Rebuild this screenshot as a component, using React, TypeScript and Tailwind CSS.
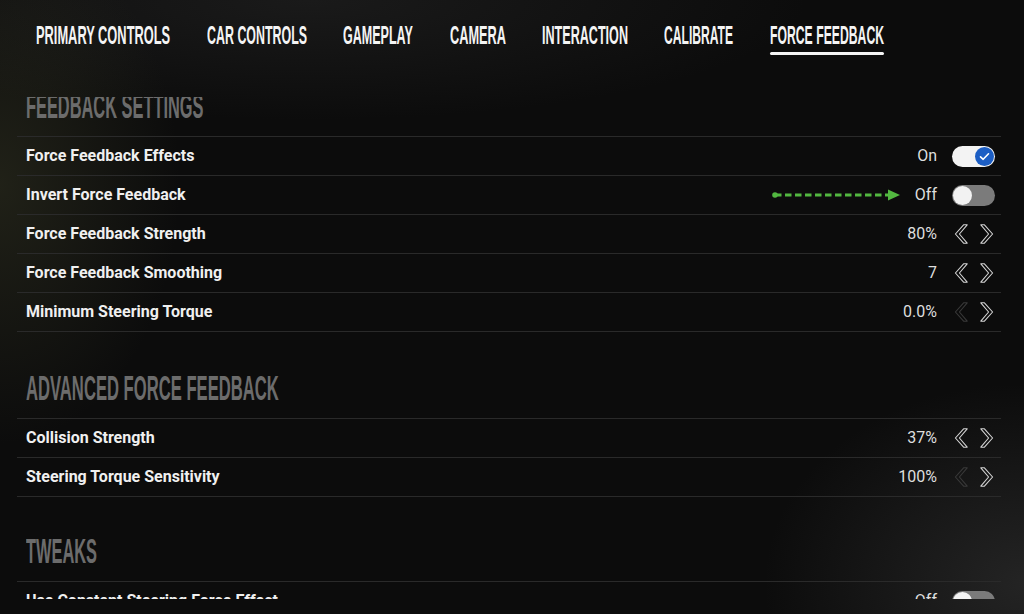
import React from "react";

const tabs: { label: string; w: string; s: string; active?: boolean }[] = [
  { label: "PRIMARY CONTROLS", w: "w-[135px]", s: "scale-x-[0.494]" },
  { label: "CAR CONTROLS", w: "w-[100px]", s: "scale-x-[0.478]" },
  { label: "GAMEPLAY", w: "w-[71px]", s: "scale-x-[0.482]" },
  { label: "CAMERA", w: "w-[56px]", s: "scale-x-[0.491]" },
  { label: "INTERACTION", w: "w-[86px]", s: "scale-x-[0.484]" },
  { label: "CALIBRATE", w: "w-[70px]", s: "scale-x-[0.466]" },
  { label: "FORCE FEEDBACK", w: "w-[114px]", s: "scale-x-[0.47]", active: true },
];

const sans = "font-['Roboto','Liberation_Sans',sans-serif]";
const cond = "font-['Liberation_Sans','Arial',sans-serif]";

function Chevron({ dir, dim }: { dir: "l" | "r"; dim?: boolean }) {
  const pts =
    dir === "l"
      ? "9.6,0.8 13.2,0.8 5.4,10 13.2,19.2 9.6,19.2 1.4,10"
      : "4.4,0.8 0.8,0.8 8.6,10 0.8,19.2 4.4,19.2 12.6,10";
  return (
    <svg width="14" height="20" viewBox="0 0 14 20" className="block">
      <polygon
        points={pts}
        fill="none"
        stroke={dim ? "#393939" : "#d4d4d4"}
        strokeWidth="1.1"
        strokeLinejoin="round"
      />
    </svg>
  );
}

function Toggle({ on }: { on: boolean }) {
  if (on) {
    return (
      <div className="w-[43px] h-[21px] rounded-full bg-[#f3f3f3] flex items-center justify-end pr-[1px]">
        <div className="w-[19px] h-[19px] rounded-full bg-[#1c5ec4] flex items-center justify-center">
          <svg width="11" height="9" viewBox="0 0 11 9">
            <path d="M1.5 4.8 L4.2 7.3 L9.5 1.8" fill="none" stroke="#ffffff" strokeWidth="1.6" strokeLinecap="round" strokeLinejoin="round" />
          </svg>
        </div>
      </div>
    );
  }
  return (
    <div className="w-[43px] h-[21px] rounded-full bg-[#7b7b7b] flex items-center pl-[1px]">
      <div className="w-[19px] h-[19px] rounded-full bg-[#f2f2f2]" />
    </div>
  );
}

function GreenArrow() {
  return (
    <svg width="130" height="14" viewBox="0 0 130 14" className="block mr-[13px]">
      <circle cx="3" cy="7" r="2.8" fill="#52b840" />
      <line x1="3" y1="7" x2="118" y2="7" stroke="#52b840" strokeWidth="3" strokeDasharray="6.5 3.5" />
      <polygon points="116,1.5 128,7 116,12.5" fill="#52b840" />
    </svg>
  );
}

type Row =
  | { label: string; kind: "toggle"; value: string; on: boolean; arrow?: boolean }
  | { label: string; kind: "step"; value: string; leftDim?: boolean };

function SettingRow({ row }: { row: Row }) {
  return (
    <div className="h-[39px] border-b border-[#2a2a2a] flex items-center pl-[9px] pr-[6px]">
      <div className={`${sans} text-[16px] font-bold text-[#f0f0f0] flex-1 whitespace-nowrap`}>{row.label}</div>
      {row.kind === "toggle" && row.arrow ? <GreenArrow /> : null}
      <div className={`${sans} text-[16px] text-[#dedede] mr-[15px] whitespace-nowrap`}>{row.value}</div>
      <div className="w-[43px] flex items-center justify-center">
        {row.kind === "toggle" ? (
          <Toggle on={row.on} />
        ) : (
          <div className="flex items-center gap-[12px]">
            <Chevron dir="l" dim={row.leftDim} />
            <Chevron dir="r" />
          </div>
        )}
      </div>
    </div>
  );
}

function Section({ title, scale, rows, mt }: { title: string; scale: string; rows: Row[]; mt: string }) {
  return (
    <div className={mt}>
      <div className="h-[35px] pl-[9px] mb-[13px] overflow-visible">
        <span
          className={`${cond} inline-block origin-left ${scale} whitespace-nowrap text-[35px] leading-[35px] font-bold text-[#6c6c6c]`}
        >
          {title}
        </span>
      </div>
      <div className="border-t border-[#2a2a2a]">
        {rows.map((r) => (
          <SettingRow key={r.label} row={r} />
        ))}
      </div>
    </div>
  );
}

export default function App() {
  const s1: Row[] = [
    { label: "Force Feedback Effects", kind: "toggle", value: "On", on: true },
    { label: "Invert Force Feedback", kind: "toggle", value: "Off", on: false, arrow: true },
    { label: "Force Feedback Strength", kind: "step", value: "80%" },
    { label: "Force Feedback Smoothing", kind: "step", value: "7" },
    { label: "Minimum Steering Torque", kind: "step", value: "0.0%", leftDim: true },
  ];
  const s2: Row[] = [
    { label: "Collision Strength", kind: "step", value: "37%" },
    { label: "Steering Torque Sensitivity", kind: "step", value: "100%", leftDim: true },
  ];
  const s3: Row[] = [{ label: "Use Constant Steering Force Effect", kind: "toggle", value: "Off", on: false }];

  return (
    <div className="w-[1024px] h-[614px] overflow-hidden bg-[#0c0c0c] bg-[radial-gradient(ellipse_180px_260px_at_0%_30%,rgba(70,72,45,0.35),transparent),radial-gradient(ellipse_260px_200px_at_100%_95%,rgba(80,80,80,0.35),transparent),radial-gradient(ellipse_500px_120px_at_30%_0%,rgba(40,40,40,0.5),transparent)] flex flex-col">
      <div className="h-[97px] shrink-0 pt-[22px] pl-[36px] flex gap-[36px]">
        {tabs.map((t) => (
          <div key={t.label} className={`${t.w} flex flex-col`}>
            <div className="h-[26px] overflow-visible">
              <span
                className={`${cond} inline-block origin-left ${t.s} whitespace-nowrap text-[26px] leading-[26px] font-bold text-[#f4f4f4]`}
              >
                {t.label}
              </span>
            </div>
            {t.active ? <div className="mt-[4px] h-[3px] rounded-full bg-[#f4f4f4]" /> : null}
          </div>
        ))}
      </div>
      <div className="h-[502px] overflow-hidden ml-[17px] w-[984px]">
        <div className="-mt-[9px]">
          <Section title="FEEDBACK SETTINGS" scale="scale-x-[0.468]" rows={s1} mt="" />
          <Section title="ADVANCED FORCE FEEDBACK" scale="scale-x-[0.475]" rows={s2} mt="mt-[38px]" />
          <Section title="TWEAKS" scale="scale-x-[0.468]" rows={s3} mt="mt-[36px]" />
        </div>
      </div>
    </div>
  );
}
